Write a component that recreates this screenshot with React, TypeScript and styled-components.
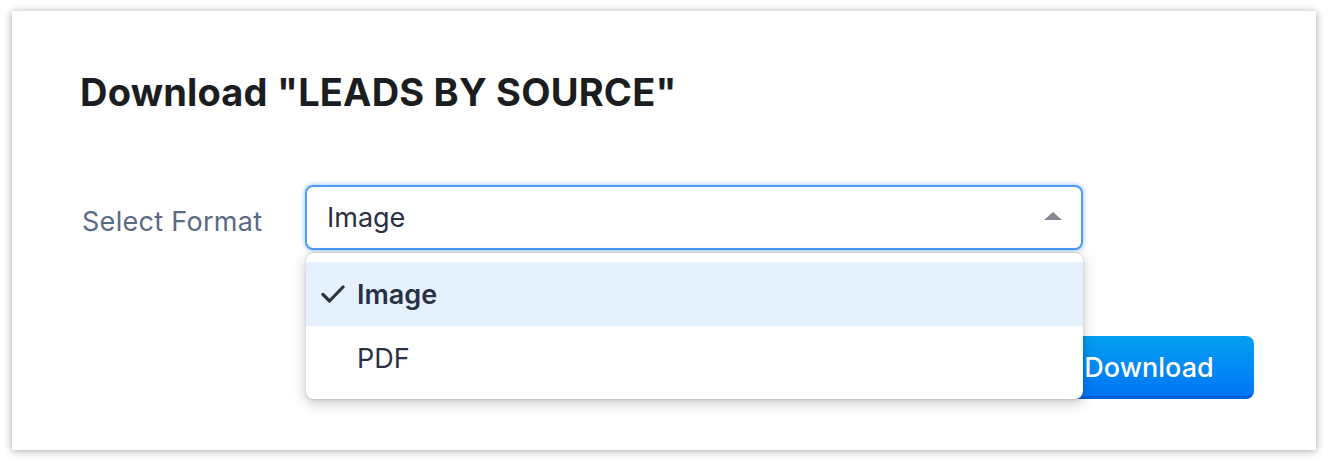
import React from 'react';
import styled, { createGlobalStyle } from 'styled-components';

const GlobalStyle = createGlobalStyle`
  * { box-sizing: border-box; }
  html, body {
    margin: 0;
    padding: 0;
    background: #ffffff;
    font-family: Inter, "Noto Sans", sans-serif;
  }
`;

const Page = styled.div`
  width: 1328px;
  height: 462px;
  padding: 11px 12px 12px 12px;
`;

const Panel = styled.div`
  height: 439px;
  background: #ffffff;
  box-shadow: 0 1px 8px rgba(0, 0, 0, 0.35);
  padding: 59px 62px 0 68px;
  display: flex;
  flex-direction: column;
`;

const Title = styled.h1`
  margin: 0;
  font-size: 38px;
  font-weight: 650;
  color: #1c1d21;
  letter-spacing: 0.2px;
  line-height: 44px;
`;

const FormRow = styled.div`
  margin-top: 71px;
  display: flex;
  align-items: center;
`;

const Label = styled.div`
  width: 225px;
  padding-left: 2px;
  padding-top: 8px;
  font-size: 27px;
  letter-spacing: 0.3px;
  color: #5b6a84;
`;

const SelectWrap = styled.div`
  position: relative;
  width: 778px;
`;

const SelectBox = styled.div`
  height: 65px;
  border: 2px solid #4d9cf8;
  border-radius: 8px;
  box-shadow: 0 0 4px 1px rgba(77, 156, 248, 0.45);
  display: flex;
  align-items: center;
  justify-content: space-between;
  padding: 0 19px 0 20px;
  font-size: 27px;
  color: #2a3142;
  background: #ffffff;
`;

const Caret = styled.span`
  width: 0;
  height: 0;
  border-left: 9px solid transparent;
  border-right: 9px solid transparent;
  border-bottom: 8px solid #858993;
  margin-top: -4px;
`;

const Menu = styled.div`
  position: absolute;
  top: 67px;
  left: 1px;
  right: 0;
  background: #ffffff;
  border-radius: 8px;
  border-top: 1px solid #d6d6d6;
  box-shadow: 0 4px 14px rgba(0, 0, 0, 0.22), 0 1px 3px rgba(0, 0, 0, 0.12);
  padding: 9px 0;
  z-index: 5;
`;

const Option = styled.div<{ $selected?: boolean }>`
  height: 64px;
  display: flex;
  align-items: center;
  padding-left: 15px;
  font-size: 27px;
  font-weight: ${p => (p.$selected ? 600 : 400)};
  color: #2a3142;
  background: ${p => (p.$selected ? '#e5f1fd' : '#ffffff')};
`;

const Check = styled.span`
  width: 36px;
  display: inline-flex;
  align-items: center;
`;

const Footer = styled.div`
  margin-top: 86px;
  display: flex;
  justify-content: flex-end;
`;

const DownloadButton = styled.button`
  width: 212px;
  height: 63px;
  border: none;
  border-radius: 8px;
  border-bottom: 3px solid #0062d6;
  background: linear-gradient(to bottom, #03a0f2, #0076f6);
  color: #ffffff;
  font-family: Inter, "Noto Sans", sans-serif;
  font-size: 27px;
  font-weight: 500;
  padding: 2px 0 0 2px;
  text-align: center;
`;

export default function App() {
  return (
    <>
      <GlobalStyle />
      <Page>
        <Panel>
          <Title>Download "LEADS BY SOURCE"</Title>
          <FormRow>
            <Label>Select Format</Label>
            <SelectWrap>
              <SelectBox>
                <span>Image</span>
                <Caret />
              </SelectBox>
              <Menu>
                <Option $selected>
                  <Check>
                    <svg width="24" height="20" viewBox="0 0 24 20">
                      <path d="M2 10.5 L8.5 17 L22 3" fill="none" stroke="#2a3142" strokeWidth="3.2" strokeLinecap="round" strokeLinejoin="round" />
                    </svg>
                  </Check>
                  Image
                </Option>
                <Option>
                  <Check />
                  PDF
                </Option>
              </Menu>
            </SelectWrap>
          </FormRow>
          <Footer>
            <DownloadButton>Download</DownloadButton>
          </Footer>
        </Panel>
      </Page>
    </>
  );
}
